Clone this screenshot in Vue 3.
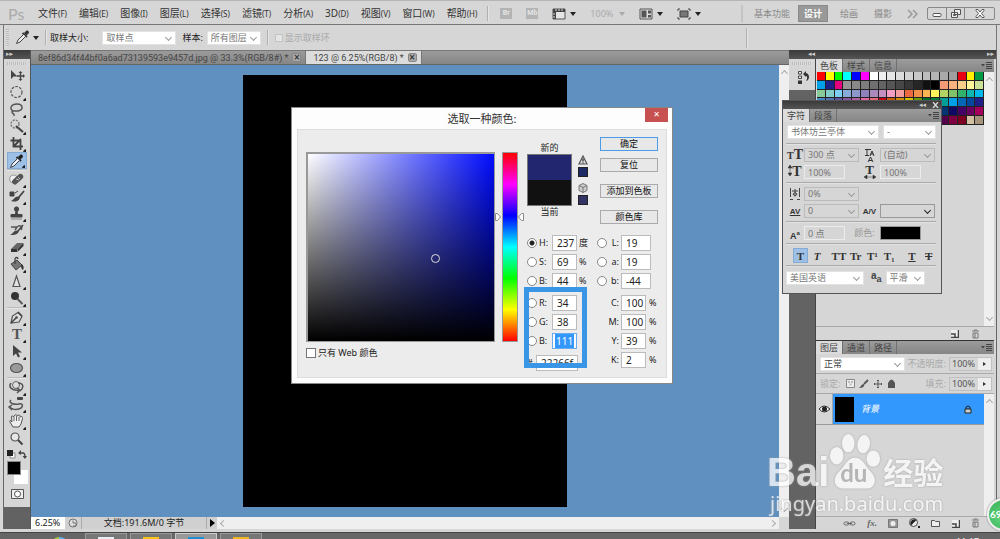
<script setup>
import { ref } from 'vue'

const menus = ['文件(F)', '编辑(E)', '图像(I)', '图层(L)', '选择(S)', '滤镜(T)', '分析(A)', '3D(D)', '视图(V)', '窗口(W)', '帮助(H)'].map(m => m.split('('))
const spaces = ['基本功能', '设计', '绘画', '摄影']

const tools = [
  { n: '移动', s: '<path d="M3 3v9l2.500-2.500h4z" fill="#444"/><path d="M12.500 5.500v7M9 9h7" stroke="#444" stroke-width="1.400" fill="none"/><path d="M12.500 4l2 2h-4zM12.500 14l2-2h-4zM17 9l-2-2v4z" fill="#444"/>' },
  { n: '选框', c: 1, s: '<circle cx="8.500" cy="8" r="5.500" fill="none" stroke="#555" stroke-width="1.200" stroke-dasharray="2.600 1.400"/>' },
  { n: '套索', c: 1, s: '<path d="M5 10C1 8 3 3 9 3s7 6 1 7c-3 .5-6-1-6 1s3 1 2 4" fill="none" stroke="#555" stroke-width="1.500"/>' },
  { n: '魔棒', c: 1, s: '<circle cx="7" cy="6" r="4" fill="none" stroke="#777" stroke-width="1.300" stroke-dasharray="2 1.200"/><path d="M8 8l7 6" stroke="#444" stroke-width="2.200"/>' },
  { n: '裁剪', c: 1, s: '<path d="M5.500 2v9.500H15M2.500 5.500h10V15M6 11l7-7" fill="none" stroke="#444" stroke-width="1.800"/>' },
  { n: '吸管', c: 1, on: 1, s: '<path d="M10 4l2-2c1.500-1.500 4 1 2.500 2.500l-2 2z" fill="#222"/><path d="M8.500 4l4.500 4" stroke="#222" stroke-width="1.800"/><path d="M9.500 5.500L4 11l-1.500 3.500L6 13l5.500-5.500" fill="#e8eef5" stroke="#444"/>' },
  { sep: 1 },
  { n: '修复', c: 1, s: '<circle cx="5.500" cy="8" r="4" fill="#eee" stroke="#999"/><rect x="3" y="5.500" width="13" height="5.500" rx="2.700" fill="#555" transform="rotate(-42 9.500 8)"/><path d="M8 8l3 1M10 6l2 2" stroke="#bbb"/>' },
  { n: '画笔', c: 1, s: '<path d="M2 4h4v4H2zM7 5l3-2" fill="#444" stroke="#444"/><path d="M16 3l-5 6" stroke="#444" stroke-width="1.800"/><path d="M12 9c-1 5-5 5-9 4 3-1 4-6 9-4z" fill="#444"/>' },
  { n: '图章', c: 1, s: '<circle cx="8.500" cy="4" r="2.500" fill="#444"/><path d="M7.500 5h2l.5 4h-3z" fill="#444"/><rect x="2.500" y="9" width="12" height="3.500" rx="1" fill="#444"/><path d="M3 14h11" stroke="#888"/>' },
  { n: '历史', c: 1, s: '<path d="M3 5h6l-2 3M9 5c3-3 6 0 4 3" fill="none" stroke="#555" stroke-width="1.500"/><path d="M15 3l-5 6" stroke="#444" stroke-width="1.500"/><path d="M11 9c-1 4-5 4-9 4 3-1 4-6 9-4z" fill="#444"/>' },
  { n: '橡皮', c: 1, s: '<path d="M3 10l6-6h6.500l-6 6z" fill="#666"/><path d="M3 10v3h6v-3zM9.500 13l6-6V4l-6 6z" fill="#333"/>' },
  { n: '油漆桶', c: 1, s: '<path d="M3 8l6-4 5 5-6 5z" fill="#777" stroke="#444"/><path d="M7 8V3c0-2 3-2 3 0" fill="none" stroke="#444" stroke-width="1.300"/><path d="M13 8c3 1 3 4 2 6-2-1-2-3-2-6z" fill="#333"/>' },
  { n: '锐化', c: 1, s: '<path d="M8.500 3L12 13.500H5z" fill="#e3e3e3" stroke="#555" stroke-width="1.200"/>' },
  { n: '减淡', c: 1, s: '<circle cx="7" cy="6" r="4" fill="#333"/><path d="M9.500 9l5 5" stroke="#555" stroke-width="1.800"/>' },
  { sep: 1 },
  { n: '钢笔', c: 1, s: '<path d="M3 14L4.500 7 10 3.500l4 4L11 13z" fill="#ddd" stroke="#555" stroke-width="1.200"/><path d="M3 14l5-5M10 3l4 4" stroke="#444" stroke-width="1.500"/><circle cx="8.500" cy="8.500" r="1.300" fill="#444"/>' },
  { n: '文字', c: 1, t: 'T' },
  { n: '路径', c: 1, s: '<path d="M5 2v11l3-2.500 2 4 2-1-2-4h4z" fill="#444"/>' },
  { n: '椭圆', c: 1, s: '<ellipse cx="8.500" cy="8" rx="6" ry="4.500" fill="#999" stroke="#555" stroke-width="1.200"/>' },
  { sep: 1 },
  { n: '3D旋转', c: 1, s: '<circle cx="8" cy="6" r="3.500" fill="#ddd" stroke="#666"/><path d="M3 4c-3 4 1 8 8 7M10 4c6 0 6 5 2 8M9 9l3 2-3 3" fill="none" stroke="#555" stroke-width="1.500"/>' },
  { n: '3D环绕', c: 1, s: '<path d="M3 4c-3 3 3 5 8 4 5-1 4 4 0 5-4 1-8 0-9-2M4 9l-3 2 3 3" fill="none" stroke="#555" stroke-width="1.500"/><rect x="9" y="1" width="6" height="3" rx="1" fill="#444"/>' },
  { n: '抓手', c: 1, s: '<path d="M5 14L2 9c-1-2 1-2 2 0L3.500 4c0-1.500 1.500-1.500 2 0L7 2c1-1 2 0 2 1l2-1c1 0 1 1 1 2l1.500-.5c1 0 1 1 1 2L13 11l-2 3z" fill="#eee" stroke="#555"/><path d="M6 8V4M8.500 8V3M11 8V4" stroke="#666"/>' },
  { n: '缩放', s: '<circle cx="7" cy="7" r="4" fill="#e6e6e6" stroke="#555" stroke-width="1.200"/><path d="M10 10l4.500 4.500" stroke="#444" stroke-width="1.900"/>' }
]

const swatches = [
  '#f00 #ff0 #0f0 #0ff #00f #f0f #fff #f0f0f0 #e6e6e6 #dcdcdc #d2d2d2 #c8c8c8 #bebebe #b4b4b4 #aaa #a0a0a0 #e60012 #fff100 #009944',
  '#00a0e9 #1d2088 #e4007f #959595 #898989 #7d7d7d #707070 #636363 #555 #464646 #363636 #262626 #111 #000 #f29b76 #f6b37f #facd89 #fff799 #cce198',
  '#89c997 #84ccc9 #7ecef4 #88abda #8c97cb #8f82bc #aa89bd #c490bf #f19ec2 #f29c9f #eb6841 #f19149 #f8b551 #fff45c #b3d465 #80c269 #32b16c #13b5b1 #00b7ee',
  '#448aca #556fb5 #5f52a0 #8957a1 #ae5da1 #ea68a2 #eb6877 #c40014 #c85a00 #d28c00 #cfc000 #639b00 #006e2b #007d3c #009e96 #00a0e9 #0068b7 #00479d #1d2088',
  '#601986 #920783 #be0081 #c7005c #c5003d #a40000 #a84200 #ac6a00 #b7aa00 #638c0b #097c25 #007130 #00736d #0075a9 #003473 #100964 #440062 #6a005f #a4005b',
  '#7d0022 #7d0000 #7f2d00 #834e00 #8a8000 #486a00 #005e15 #005621 #005752 #005982 #002c58 #07004b #32004b #51004a #52004a #7e0043 #7d0022 #d3bfa2 #a6937c'
].join(' ').split(' ')

const mode = ref('H')
const hue = ref(237)
const left = [
  { k: 'H', v: '237', u: '度' }, { k: 'S', v: '69', u: '%' }, { k: 'B', v: '44', u: '%' },
  { k: 'R', v: '34', gap: 1 }, { k: 'G', v: '38' }, { k: 'B', id: 'Blue', v: '111', sel: 1 }
]
const right = [
  { k: 'L', v: '19' }, { k: 'a', v: '19' }, { k: 'b', id: 'lab-b', v: '-44' },
  { k: 'C', v: '100', u: '%', gap: 1 }, { k: 'M', v: '100', u: '%' }, { k: 'Y', v: '39', u: '%' }, { k: 'K', v: '2', u: '%' }
]
const typeStyles = ['T', 'T', 'TT', 'Tr', 'T¹', 'T₁', 'T', 'T']
const tasks = ['#e8eef4', '#f5c518', '#1f8fd0', '#e8b923']
</script>

<template>
  <div class="app">
    <header class="menubar">
      <span class="ps">Ps</span>
      <nav><button v-for="m in menus" :key="m[1]">{{ m[0] }}<small>({{ m[1] }}</small></button></nav>
      <i class="vr"></i>
      <div class="appicons">
        <span class="chip">Br</span><span class="chip">Mb</span>
        <button class="ico" aria-label="查看额外内容"><svg width="14" height="12" viewBox="0 0 14 12"><path d="M1 1h12v10H1z" fill="#e5e5e5" stroke="#555" /><path d="M1 1h12v3H4v7H1z" fill="#444" /><path d="M4 1v2M7 1v2M10 1v2M1 6h2M1 9h2" stroke="#ddd" /></svg><b class="tri"></b></button>
        <button class="ico pct">100%<b class="tri"></b></button>
        <button class="ico" aria-label="排列文档"><svg width="14" height="12" viewBox="0 0 14 12"><path d="M1 1h12v10H1z" fill="#ddd" stroke="#555" /><path d="M2.500 2.500h5v7h-5zM9 2.500h3v3H9zM9 7h3v2.500H9z" fill="#555" /></svg><b class="tri"></b></button>
        <button class="ico" aria-label="屏幕模式"><svg width="14" height="12" viewBox="0 0 14 12"><path d="M1 3V1h2M11 1h2v2M13 9v2h-2M3 11H1V9" fill="none" stroke="#444" /><path d="M3 3h8v6H3z" fill="#777" stroke="#444" /></svg><b class="tri"></b></button>
      </div>
      <div class="spaces">
        <button v-for="(s, i) in spaces" :key="s" :class="{ on: i === 1 }">{{ s }}</button>
        <button class="more" aria-label="更多"><svg width="11" height="10" viewBox="0 0 11 10"><path d="M1 1l4 4-4 4M6 1l4 4-4 4" fill="none" stroke="#999" stroke-width="1.500" /></svg></button>
      </div>
      <div class="winbtns">
        <button aria-label="最小化"><svg width="10" height="8"><rect x="1" y="3.500" width="8" height="3" rx="1" fill="#fff" stroke="#555" /></svg></button>
        <button aria-label="还原"><svg width="10" height="9"><path d="M3.500.500h6v5h-6zM.500 3.500h6v5h-6z" fill="#eee" stroke="#555" /><path d="M2.500 5.500h2v1h-2z" stroke="#555" fill="none" /></svg></button>
        <button class="wide" aria-label="关闭"><svg width="10" height="9"><path d="M1 .500h2l2 2.500 2-2.500h2v1L6.500 4.500 9 7.500v1H7L5 6 3 8.500H1v-1l2.500-3L1 1.500z" fill="#fff" stroke="#555" /></svg></button>
      </div>
    </header>

    <section class="options">
      <i class="grip-v"></i>
      <svg class="drop" width="18" height="17" viewBox="0 0 18 17"><path d="M10 4l2-2c1.500-1.500 4 1 2.500 2.500l-2 2z" fill="#333" /><path d="M8.500 4l4.500 4" stroke="#333" stroke-width="1.800" /><path d="M9.500 5.500L4 11l-1.500 3.500L6 13l5.500-5.500" fill="#eee" stroke="#444" /></svg>
      <b class="tri"></b>
      <i class="vr"></i>
      <label for="size">取样大小:</label>
      <span class="sel w73"><select id="size"><option>取样点</option></select></span>
      <label for="sample">样本:</label>
      <span class="sel w53"><select id="sample"><option>所有图层</option></select></span>
      <i class="vr thin"></i>
      <label class="dim"><input type="checkbox" disabled />显示取样环</label>
      <i class="vr end"></i>
    </section>

    <main class="work">
      <aside class="toolbar">
        <div class="dark"><span>▸▸</span></div>
        <div class="tools">
          <i class="grip"></i>
          <template v-for="(t, i) in tools" :key="i">
            <hr v-if="t.sep" />
            <button v-else :class="{ on: t.on }" :aria-label="t.n">
              <span v-if="t.t" class="glyph">{{ t.t }}</span>
              <svg v-else width="18" height="17" viewBox="0 0 18 17" v-html="t.s"></svg>
              <i v-if="t.c" class="corner"></i>
            </button>
          </template>
          <div class="mini">
            <svg width="9" height="9"><path d="M3 3h5v5H3z" fill="#fff" stroke="#888" /><path d="M0 0h6v6H0z" fill="#222" /></svg>
            <svg width="9" height="9"><path d="M1 3h4q2 0 2 4" fill="none" stroke="#444" stroke-width="1.300" /><path d="M0 3l3-3v5zM7 9L4.500 6h4.500z" fill="#444" /></svg>
          </div>
          <div class="fgbg"><i class="bg"></i><i class="fg"></i></div>
          <button class="mask" aria-label="快速蒙版"><svg width="13" height="10"><path d="M.500.500h12v9H.500z" fill="#eee" stroke="#555" /><circle cx="6.500" cy="5" r="3" fill="#fff" stroke="#555" /></svg></button>
        </div>
      </aside>

      <section class="doc">
        <div class="tabs">
          <div class="tab">8ef86d34f44bf0a6ad73139593e9457d.jpg @ 33.3%(RGB/8#) * <button aria-label="关闭">×</button></div>
          <div class="tab on">123 @ 6.25%(RGB/8) * <button aria-label="关闭">×</button></div>
        </div>
        <div class="view">
          <div class="stage"><div class="paper"></div></div>
          <div class="scroll"><i class="chev up"></i><i class="chev"></i></div>
        </div>
        <footer class="status">
          <input class="zoom" aria-label="缩放" value="6.25%" />
          <span class="clock"><svg width="10" height="10"><circle cx="5" cy="5" r="4" fill="#ddd" stroke="#777" /><path d="M5 2.500V5h3v3H5" fill="none" stroke="#777" /></svg></span>
          <span class="info">文档:191.6M/0 字节</span>
          <button class="play" aria-label="选项"></button>
          <div class="hscroll"><i class="chev lt"></i><i class="chev rt"></i></div>
          <i class="cornerbox"></i>
        </footer>
      </section>

      <section class="dock">
        <div class="dark"><span class="a">◂◂</span><span>▸▸</span></div>
        <div class="cols">
          <div class="iconcol"><div class="iconbox"><i class="grip"></i>
            <svg width="13" height="15" viewBox="0 0 13 15"><path d="M1.500 1.500h3v2.500h-3zM1.500 6h3v2.500h-3z" fill="#eee" stroke="#444" /><path d="M1 10.500h4V14H1z" fill="#333" /><path d="M6 4l3-3v2c4 1 4 7 0 8 2-3 1-5 0-5v1z" fill="#333" /></svg></div></div>
          <div class="panels">
            <div class="ptabs"><button class="on">色板</button><button>样式</button><button>信息</button><svg class="pm" width="11" height="7"><path d="M0 2h4L2 4.500zM5 0h6v1H5zM5 2h6v1H5zM5 4h6v1H5zM5 6h6v1H5z" fill="#444" /></svg></div>
            <div class="swpanel">
              <div class="swgrid"><i v-for="(c, i) in swatches" :key="i" :style="{ background: c }"></i></div>
              <div class="scroll"><i class="chev up"></i><i class="chev"></i></div>
            </div>
            <div class="pfoot sw">
              <svg width="9" height="9"><path d="M1 1h7v7H1z" fill="#eee" /><path d="M8.500 1v7.500H1M1 5h4v3" fill="none" stroke="#444" stroke-width="1.500" /></svg>
              <svg width="9" height="10"><path d="M1 2h7M3 1h3M2 4h5v5H2zM4 4v5" fill="none" stroke="#777" /></svg>
            </div>
            <div class="ptabs layer-tabs"><button class="on">图层</button><button>通道</button><button>路径</button><svg class="pm" width="11" height="7"><path d="M0 2h4L2 4.500zM5 0h6v1H5zM5 2h6v1H5zM5 4h6v1H5zM5 6h6v1H5z" fill="#444" /></svg></div>
            <div class="lrow">
              <span class="sel grow"><select aria-label="混合模式"><option>正常</option></select></span>
              <label for="op">不透明度:</label><span class="num"><input id="op" value="100%" /><b></b></span>
            </div>
            <div class="lrow">
              <span class="lk">锁定:</span>
              <span class="locks">
                <svg width="9" height="9"><path d="M.500.500h8v8h-8z" fill="#eee" stroke="#888" /><path d="M2 2h2v2H2zM5 2h2v2H5zM3.500 4.500h2v2h-2z" fill="#bbb" /></svg>
                <svg width="10" height="10"><path d="M9 1L5 5" stroke="#555" stroke-width="1.800" /><path d="M5 5c1 3-2 4-5 4 2-1 2-4 5-4z" fill="#555" /></svg>
                <svg width="10" height="10"><path d="M5 1v8M1 5h8M4 2l1-1 1 1M4 8l1 1 1-1M2 4L1 5l1 1M8 4l1 1-1 1" fill="none" stroke="#555" /></svg>
                <svg width="9" height="10"><path d="M1 4q3.500-7 7 0v5H1z" fill="#555" /></svg>
              </span>
              <label for="fill">填充:</label><span class="num"><input id="fill" value="100%" /><b></b></span>
            </div>
            <div class="layers">
              <div class="list">
                <div class="item">
                  <span class="eye"><svg width="11" height="8"><path d="M0 4q5-6 11 0-6 6-11 0z" fill="#eee" stroke="#333" /><circle cx="5.500" cy="4" r="2.500" fill="#222" /></svg></span>
                  <i class="thumb"></i><em>背景</em>
                  <svg width="8" height="9"><path d="M1 4h6v4H1z" fill="#ccc" stroke="#222" /><path d="M2 4V2q2-2 4 0v2" fill="none" stroke="#222" /></svg>
                </div>
              </div>
              <div class="scroll"><i class="chev up"></i></div>
            </div>
            <div class="pfoot">
              <svg width="13" height="9"><rect x="1" y="3" width="5" height="3" rx="1.500" fill="none" stroke="#666" /><rect x="7" y="3" width="5" height="3" rx="1.500" fill="none" stroke="#666" /><path d="M4 4.500h5" stroke="#666" /></svg>
              <i class="fx">fx.</i>
              <svg width="10" height="9"><path d="M.500.500h9v8h-9z" fill="#999" stroke="#777" /><circle cx="5" cy="4.500" r="2.500" fill="#eee" /></svg>
              <svg width="11" height="10"><circle cx="4.500" cy="4.500" r="4" fill="#eee" stroke="#444" /><path d="M2 7.500A4 4 0 0 1 7.500 2z" fill="#222" /><path d="M9 8h2v2H9z" fill="#222" /></svg>
              <svg width="9" height="8"><path d="M.500 1.500h3l1 1h4v5h-8z" fill="#eee" stroke="#555" /></svg>
              <svg width="9" height="9"><path d="M1 1h7v7H1z" fill="#eee" /><path d="M8.500 1v7.500H1M1 5h4v3" fill="none" stroke="#444" stroke-width="1.500" /></svg>
              <svg width="9" height="10"><path d="M1 2h7M3 1h3M2 4h5v5H2zM4 4v5" fill="none" stroke="#777" /></svg>
            </div>
          </div>
        </div>
      </section>
    </main>

    <footer class="taskbar">
      <i class="orb"></i>
      <span v-for="(c, i) in tasks" :key="c" class="task" :class="{ on: i === 2 }"><i :style="{ background: c }"></i></span>
      <time>11:17</time>
    </footer>

    <section class="char" aria-label="字符面板">
      <div class="dark"><span>◂◂</span><svg width="7" height="6"><path d="M1 0l5 6M6 0L1 6" stroke="#ddd" stroke-width="1.300" /></svg></div>
      <div class="ptabs"><button class="on">字符</button><button>段落</button><svg class="pm" width="11" height="7"><path d="M0 2h4L2 4.500zM5 0h6v1H5zM5 2h6v1H5zM5 4h6v1H5zM5 6h6v1H5z" fill="#444" /></svg></div>
      <div class="cbody">
        <div class="crow first"><span class="sel font"><select aria-label="字体"><option>书体坊兰亭体</option></select></span><span class="sel dash"><select aria-label="样式"><option>-</option></select></span></div>
        <hr />
        <div class="cgrid">
          <label for="c1" class="ti"><small>T</small>T</label><span class="sel flat"><select id="c1"><option>300 点</option></select></span>
          <label for="c2"><svg width="10" height="13"><path d="M0 .500h6M0 6.500h4M2 1v5M5 7l2-5 2 5M5.500 5h3M3 13l2.500-5L8 13M4 11.500h3" fill="none" stroke="#333" /></svg></label><span class="sel flat"><select id="c2"><option>(自动)</option></select></span>
          <label for="c3" class="ti"><svg width="4" height="11"><path d="M2 2v7M0 3l2-3 2 3zM0 8l2 3 2-3z" fill="#333" stroke="#333" stroke-width=".5" /></svg>T</label><input id="c3" value="100%" />
          <label for="c4" class="tw">T<svg width="12" height="4"><path d="M2 2h8M0 2l3-2v4zM12 2L9 0v4z" fill="#333" stroke="#333" stroke-width=".5" /></svg></label><input id="c4" value="100%" />
        </div>
        <hr />
        <div class="cgrid">
          <label for="c5"><svg width="12" height="13"><path d="M1.500 0v9M10.500 0v9M3 3h6M6 1v7M4 6q2-3 4 0-2 4-4 0M1 11.500h3M8 11.500h3" fill="none" stroke="#444" /></svg></label><span class="sel flat"><select id="c5"><option>0%</option></select></span><i></i><i></i>
          <label for="c6" class="av">AV</label><span class="sel flat"><select id="c6"><option>0</option></select></span>
          <label for="c7" class="av k">A/V</label><span class="sel flat act"><select id="c7"><option></option></select></span>
        </div>
        <hr />
        <div class="cgrid">
          <label for="c8" class="aa">A<sup>a</sup></label><input id="c8" value="0 点" />
          <label class="clr" for="c9">颜色:</label><button id="c9" class="black" aria-label="颜色"></button>
        </div>
        <hr />
        <div class="tstyles"><button v-for="(t, i) in typeStyles" :key="i" :class="'t' + i">{{ t }}</button></div>
        <hr />
        <div class="crow last"><span class="sel lang"><select aria-label="语言"><option>美国英语</option></select></span><label for="c10">a<sub>a</sub></label><span class="sel aas"><select id="c10"><option>平滑</option></select></span></div>
      </div>
    </section>

    <div class="watermark">
      <div class="wl"><span>Bai</span>
        <span class="paw"><svg width="52" height="57" viewBox="0 0 54 58"><g fill="#fff"><ellipse cx="8" cy="23" rx="7" ry="9" /><ellipse cx="20" cy="10" rx="6.500" ry="9.500" /><ellipse cx="36" cy="11" rx="6.500" ry="9.500" transform="rotate(8 36 11)" /><ellipse cx="46" cy="26" rx="7" ry="8.500" /><path d="M27 25c8 0 10 8 16 14 8 8 5 18-4 18-6 0-18 0-24 0-10 0-12-11-4-18 6-6 8-14 16-14z" /></g></svg><b>du</b></span>
        <span class="jy">经验</span></div>
      <div class="url">jingyan.baidu.com</div>
    </div>
    <div class="badge">69</div>

    <section class="dialog" role="dialog" aria-label="选取一种颜色">
      <header><h1>选取一种颜色:</h1><button class="close" aria-label="关闭">✕</button></header>
      <div class="dbody">
        <div class="pick">
          <div class="sv"><i class="ring"></i></div>
          <label class="web"><input type="checkbox" />只有 Web 颜色</label>
        </div>
        <div class="hue">
          <input v-model="hue" type="range" min="0" max="360" aria-label="色相" />
          <svg class="al" width="6" height="8"><path d="M.500.500h2l3 3.500-3 3.500h-2z" fill="#fff" stroke="#888" /></svg>
          <svg class="ar" width="6" height="8"><path d="M5.500.500h-2L.500 4l3 3.500h2z" fill="#fff" stroke="#888" /></svg>
        </div>
        <div class="side">
          <div class="top">
            <div class="cmp"><span>新的</span><div class="pair"><i></i><i></i></div><span>当前</span></div>
            <div class="warn">
              <svg width="10" height="10"><path d="M5 1l4 8H1z" fill="#ddd" stroke="#555" stroke-width="1.200" /><path d="M5 3.500v3M5 7.500v1" stroke="#333" stroke-width="1.300" /></svg><i></i>
              <svg width="10" height="10"><path d="M5 .500l4 2v5l-4 2-4-2v-5z" fill="#ccc" stroke="#777" /><path d="M1 2.500l4 2 4-2M5 4.500v5" fill="none" stroke="#777" /></svg><i class="v"></i>
            </div>
            <div class="btns"><button class="ok">确定</button><button>复位</button><button class="far">添加到色板</button><button class="far">颜色库</button></div>
          </div>
          <div class="fields">
            <div class="fcol">
              <div v-for="f in left" :key="f.id || f.k" class="f" :class="{ gap: f.gap }">
                <input :id="'r' + (f.id || f.k)" v-model="mode" type="radio" name="m" :value="f.id || f.k" />
                <label :for="'r' + (f.id || f.k)">{{ f.k }}:</label>
                <span v-if="f.sel" class="box focus"><mark>{{ f.v }}</mark></span>
                <input v-else class="box" :aria-label="f.k" :value="f.v" />
                <span class="u">{{ f.u }}</span>
              </div>
              <div class="f hex gap"><label for="hex">#</label><input id="hex" class="box" value="22266f" /></div>
            </div>
            <div class="fcol rt">
              <div v-for="(f, i) in right" :key="f.k" class="f" :class="{ gap: f.gap, wide: i < 3 }">
                <input v-if="i < 3" :id="'q' + f.k" v-model="mode" type="radio" name="m" :value="f.id || 'lab' + f.k" />
                <label :for="'v' + f.k">{{ f.k }}:</label>
                <input :id="'v' + f.k" class="box" :value="f.v" />
                <span class="u">{{ f.u }}</span>
              </div>
            </div>
            <i class="frame"></i>
          </div>
        </div>
      </div>
    </section>
  </div>
</template>

<style>
body { margin: 0; }
</style>

<style scoped>
* { box-sizing: border-box; }
.app { position: relative; display: flex; flex-direction: column; min-height: 100vh; overflow: hidden; background: #d6d6d6; color: #333; font: 9px/12px "Noto Sans", "Noto Sans CJK SC", sans-serif; white-space: nowrap; }
button, input, select { font: inherit; color: inherit; margin: 0; padding: 0; border: 0; background: none; border-radius: 0; min-width: 0; }
i, em { font-style: normal; }
svg { display: block; flex: none; }
hr { border: 0; margin: 0; }
.tri { display: inline-block; border: 3px solid transparent; border-top: 4px solid #222; border-bottom: 0; }
.chev { width: 5px; height: 5px; border: solid #aaa; border-width: 0 1px 1px 0; transform: rotate(45deg); }
.chev.up { transform: rotate(225deg); }
.chev.lt { transform: rotate(135deg); }
.chev.rt { transform: rotate(-45deg); }
.scroll { width: 10px; flex: none; background: #efefef; display: flex; flex-direction: column; align-items: center; justify-content: space-between; padding: 6px 0; }
.grip { display: block; height: 3px; margin: 2px 3px; background: repeating-linear-gradient(90deg, #bbb 0 1px, #ddd 1px 2px); }

.menubar { display: flex; align-items: center; height: 25px; padding: 2px 5px 0 8px; border-top: 1px solid #b5b5b5; border-bottom: 1px solid #777; }
.ps { width: 30px; color: #aaa; font: 16px/18px Lato, sans-serif; }
nav { display: flex; gap: 12px; font-size: 10px; }
nav small { font-size: 8px; }
.vr { width: 2px; height: 15px; background: #b0b0b0; border-right: 1px solid #e5e5e5; }
.menubar .vr { margin-left: 10px; }
.appicons { display: flex; align-items: center; gap: 14px; margin-left: 11px; }
.chip { width: 12px; height: 11px; background: #b4b4b4; color: #e5e5e5; font: bold 7px/11px Roboto, sans-serif; text-align: center; }
.ico { display: flex; align-items: center; gap: 4px; }
.pct { color: #aaa; gap: 6px; }
.pct .tri { border-top-color: #aaa; }
.spaces { display: flex; align-items: center; margin-left: auto; padding-left: 4px; border-left: 2px solid #c3c3c3; color: #888; }
.spaces button { padding: 0 7px; height: 17px; }
.spaces button:first-child { padding-right: 4px; }
.spaces button:nth-child(n+3) { padding: 0 8px; }
.spaces .on { margin: 0 4px; background: #999; border: 1px solid #8a8a8a; color: #fff; font-weight: bold; padding: 0 5px; }
.spaces .more:last-child { padding: 0 6px 0 7px; }
.winbtns { display: flex; margin-left: 3px; border: 1px solid #888; border-radius: 2px; height: 13px; }
.winbtns button { display: grid; place-items: center; width: 18px; }
.winbtns button + button { border-left: 1px solid #888; }
.winbtns .wide { width: 30px; }

.options { display: flex; align-items: center; height: 25px; margin: 0 3px; border-left: 1px solid #777; border-right: 1px solid #777; color: #222; }
.grip-v { width: 3px; height: 18px; margin: 0 5px 0 2px; background: repeating-linear-gradient(#bbb 0 1px, #ddd 1px 2px); }
.options .tri { margin: 0 6px 0 1px; }
.options > label:not(.dim) { margin-left: 3px; }
.options .sel { margin: 0 3px 0 14px; }
.options .w53 { margin: 0 6px 0 4px; }
.sel { position: relative; display: inline-flex; height: 14px; background: #fff; border: 1px solid #e2e2e2; color: #777; }
.sel select { appearance: none; width: 100%; padding: 0 12px 0 3px; line-height: 12px; }
.sel::after { content: ""; position: absolute; right: 4px; top: 3px; width: 4px; height: 4px; border: solid #999; border-width: 0 1px 1px 0; transform: rotate(45deg); pointer-events: none; }
.w73 { width: 74px; }
.w53 { width: 54px; }
.dim { display: flex; align-items: center; gap: 2px; color: #aaa; margin-left: 6px; }
.dim input { appearance: none; width: 8px; height: 8px; border: 1px solid #c3c3c3; background: #e5e5e5; }
.end { margin: 0 248px 0 auto; height: 20px; }

.work { display: flex; flex: 1; margin: 0 3px; border: solid #666; border-width: 0 1px; }
.dark { display: flex; justify-content: space-between; align-items: center; height: 9px; padding: 0 2px; background: linear-gradient(#3a3a3a, #555); color: #ccc; font: 7px/9px "DejaVu Sans", sans-serif; }
.toolbar { width: 27px; flex: none; background: #626262; border-right: 1px solid #555; }
.tools { display: flex; flex-direction: column; align-items: center; background: #d6d6d6; padding: 1px 0 5px; }
.tools .grip { align-self: stretch; }
.tools button { position: relative; display: grid; place-items: center; width: 20px; height: 17px; }
.tools .on { background: #9dc0e6; border: 1px solid #86acd5; }
.tools hr { width: 20px; height: 2px; background: #bbb; border-bottom: 1px solid #e5e5e5; }
.corner { position: absolute; right: 1px; bottom: 0; border: 2px solid transparent; border-right-color: #222; border-bottom-color: #222; border-top-width: 1px; border-left-width: 1px; }
.glyph { font: bold 15px/17px "Liberation Serif", serif; color: #555; }
.mini { display: flex; justify-content: space-between; width: 20px; margin-top: 3px; }
.fgbg { position: relative; width: 21px; height: 23px; margin-top: 2px; }
.fg, .bg { position: absolute; width: 14px; height: 14px; }
.fg { left: 0; top: 0; background: #000; border: 1px solid #888; }
.bg { right: 0; bottom: 0; background: #fff; }
.tools .mask { margin-top: 1px; }

.doc { display: flex; flex-direction: column; flex: 1; min-width: 0; }
.tabs { display: flex; height: 15px; background: linear-gradient(#9b9b9b, #868686); border-top: 1px solid #777; border-bottom: 1px solid #666; }
.tab { display: flex; align-items: center; gap: 4px; padding: 0 4px 0 7px; font-family: Roboto, sans-serif; border-right: 1px solid #777; color: #444; }
.tab.on { background: #dcdcdc; }
.tab button { width: 9px; height: 9px; background: #aaa; border: 1px solid #888; border-radius: 2px; font: bold 8px/7px "DejaVu Sans", sans-serif; color: #333; }
.view { display: flex; flex: 1; background: #6090c0; }
.stage { flex: 1; display: flex; justify-content: center; padding: 10px 0; }
.paper { aspect-ratio: 3 / 4; background: #000; }
.status { display: flex; height: 12px; background: #d0d0d0; color: #222; }
.zoom { width: 34px; padding: 0 4px; background: #fff; }
.clock { width: 17px; padding: 1px 3px; border-right: 1px solid #aaa; }
.info { width: 125px; text-align: center; border-right: 1px solid #aaa; }
.play { width: 10px; display: grid; place-items: center; }
.play::after { content: ""; border: 4px solid transparent; border-left: 5px solid #000; border-right: 0; }
.hscroll { flex: 1; display: flex; align-items: center; justify-content: space-between; padding: 0 4px; background: #efefef; }
.cornerbox { width: 10px; background: #d6d6d6; }

.dock { display: flex; flex-direction: column; width: 207px; flex: none; }
.dock .dark .a { margin-left: 17px; }
.cols { display: flex; flex: 1; }
.iconcol { width: 27px; background: #636363; border-right: 1px solid #444; }
.iconbox { height: 31px; background: #d6d6d6; padding: 1px 0; }
.iconbox svg { margin: 5px 0 0 8px; }
.panels { display: flex; flex-direction: column; flex: 1; min-width: 0; padding-right: 2px; }
.ptabs { display: flex; height: 13px; background: linear-gradient(#9c9c9c, #868686); }
.ptabs button { padding: 0 4px; border-right: 1px solid #707070; color: #444; }
.ptabs .on { background: #dcdcdc; }
.pm { margin: 3px 2px 0 auto; }
.swpanel { display: flex; height: 255px; border-bottom: 1px solid #aaa; }
.swgrid { flex: 1; display: grid; grid-template-columns: repeat(19, 1fr); align-content: start; padding-left: 1px; }
.swgrid i { aspect-ratio: 1; border: solid #222; border-width: 0 1px 1px 0; }
.pfoot { display: flex; align-items: center; justify-content: flex-end; gap: 11px; height: 13px; padding-right: 14px; border-top: 1px solid #aaa; }
.pfoot.sw { gap: 12px; border: 0; }
.fx { font: italic bold 9px/9px "Liberation Serif", serif; color: #666; }
.layer-tabs { border-top: 1px solid #333; height: 14px; }
.lrow { display: flex; align-items: center; height: 20px; padding: 0 2px 0 4px; color: #aaa; border-bottom: 1px solid #aaa; }
.grow { flex: 1; margin-right: 3px; color: #444; }
.lk { margin-right: 6px; }
.locks { display: flex; gap: 4px; margin-right: auto; }
.num { display: flex; align-items: center; width: 43px; height: 14px; margin-left: 3px; border: 1px solid #c0c0c0; color: #555; }
.num input { flex: 1; width: 20px; padding-left: 2px; }
.num b { width: 13px; height: 12px; background: #eee; display: grid; place-items: center; }
.num b::after { content: ""; border: 2px solid transparent; border-left: 3px solid #333; border-right: 0; }
.layers { display: flex; flex: 1; }
.list { flex: 1; }
.item { display: flex; align-items: center; height: 31px; padding-right: 12px; background: #3398fe; border-bottom: 1px solid #999; color: #fff; }
.eye { display: grid; place-items: center; width: 17px; height: 30px; background: #d6d6d6; border-right: 1px solid #aaa; }
.thumb { width: 19px; height: 25px; margin: 0 7px 0 2px; background: #000; }
.item em { flex: 1; font-style: italic; }

.taskbar { position: relative; display: flex; gap: 3px; height: 10px; padding-left: 50px; overflow: hidden; background: #666; border-top: 3px solid #d6d6d6; box-shadow: inset 0 1px #444; }
.orb { width: 19px; height: 19px; margin: 5px 13px 0 0; border-radius: 50%; background: linear-gradient(90deg, #a6ce39 50%, #59b4e8 50%); }
.task { width: 42px; height: 9px; margin-top: 1px; padding: 3px 12px; background: #777; border: 1px solid #999; }
.task.on { background: #999; border-color: #ccc; }
.task i { display: block; height: 10px; }
.taskbar time { margin: 4px 21px 0 auto; color: #eee; }

.char { position: absolute; left: 782px; top: 100px; width: 160px; background: #d6d6d6; border: 1px solid #555; }
.char .dark { justify-content: flex-end; gap: 6px; height: 8px; }
.cbody { padding: 3px 5px 8px 3px; color: #777; }
.crow { display: flex; gap: 4px; }
.crow.first { height: 18px; padding-left: 1px; }
.font { width: 92px; }
.dash { flex: 1; }
.cbody hr { height: 2px; background: #aaa; border-bottom: 1px solid #e2e2e2; margin-bottom: 3px; }
.cgrid { display: grid; grid-template-columns: 18px 55px 21px 55px; row-gap: 3px; padding: 0 0 3px; align-items: center; }
.cgrid label { display: grid; place-items: center; height: 14px; color: #333; }
.cgrid .ti { display: flex; justify-content: center; align-items: baseline; font: bold 14px/14px "Liberation Serif", serif; }
.cgrid .ti small { font-size: 10px; }
.cgrid .tw { align-content: center; font: bold 13px/10px "Liberation Serif", serif; }
.cgrid input { width: 41px; height: 14px; padding-left: 3px; border: 1px solid #ececec; }
.flat { background: #d6d6d6; border-color: #bbb; }
.act { border-color: #999; }
.act::after { border-color: #222; }
.cgrid .av { font: bold 8px/9px "Liberation Sans", sans-serif; text-decoration: underline; }
.cgrid .k { text-decoration: none; }
.cgrid .aa { display: block; text-align: center; font: bold 9px/14px "Liberation Sans", sans-serif; }
.cgrid .aa sup { font-size: 6px; }
.cgrid .clr { color: #999; margin-left: -10px; }
.cgrid .black { width: 41px; height: 14px; background: #000; border: 1px solid #999; }
.tstyles { display: flex; gap: 2px; padding: 0 0 2px 7px; font: bold 11px/14px "Liberation Serif", serif; color: #333; }
.tstyles button { width: 15px; height: 15px; }
.tstyles .t0 { background: #9dc0e6; border: 1px solid #86acd5; }
.tstyles .t1 { font-style: italic; margin-right: 5px; }
.tstyles .t6 { text-decoration: underline; margin-left: 6px; }
.tstyles .t7 { text-decoration: line-through; }
.crow.last { padding-top: 1px; }
.lang { width: 78px; }
.crow label { margin-left: 3px; font: bold 10px/10px "Liberation Sans", sans-serif; color: #444; }
.crow sub { font-size: 9px; }
.aas { width: 39px; }

.watermark { position: absolute; left: 767px; top: 432px; color: #fff; opacity: .75; filter: drop-shadow(0 0 1px #999); font-family: "Liberation Sans", "Noto Sans CJK SC", sans-serif; }
.wl { display: flex; align-items: flex-end; height: 58px; font-weight: bold; font-size: 40px; line-height: 36px; }
.paw { position: relative; }
.paw b { position: absolute; left: 11px; bottom: 5px; color: #aaa; font: bold 24px/24px Lato, sans-serif; }
.jy { margin-left: 2px; font-size: 30px; line-height: 32px; }
.url { padding: 2px 0 0 3px; font: 20px/24px "Noto Sans", sans-serif; }
.badge { position: absolute; right: -20px; top: 498px; width: 33px; height: 33px; padding-left: 1px; border-radius: 50%; border: 2px solid #eee; background: radial-gradient(circle at 40% 60%, #5fd37b, #32a852); color: #fff; font: bold 10px/29px Lato, sans-serif; box-shadow: 0 0 2px #666; }

.dialog { position: absolute; left: 291px; top: 107px; width: 382px; padding: 0 5px 5px; background: #fdfdfd; border: 1px solid #888; font-size: 10px; }
.dialog header { position: relative; height: 21px; }
h1 { margin: 0; font-size: 11px; line-height: 21px; font-weight: normal; text-align: center; color: #333; }
.close { position: absolute; right: -1px; top: 0; width: 23px; height: 14px; background: #c75050; color: #fff; font: 8px/14px "DejaVu Sans", sans-serif; }
.dbody { display: flex; height: 249px; padding: 7px 8px 0; background: #ececec; border: 1px solid #ddd; }
.pick { flex: none; width: 189px; margin-top: 15px; }
.sv { position: relative; height: 190px; border: 1px solid #999; border-width: 2px 1px 1px 2px; background: linear-gradient(to top, #000, transparent), linear-gradient(to right, #fff, #000cff); }
.ring { position: absolute; left: 69%; top: 56%; width: 9px; height: 9px; margin: -5px; border: 1px solid #ddd; border-radius: 50%; }
.web { display: flex; align-items: center; gap: 2px; margin-top: 5px; color: #222; font-size: 9px; }
.web input { appearance: none; width: 10px; height: 10px; border: 1px solid #777; background: #fff; }
.hue { position: relative; flex: none; width: 16px; height: 190px; margin: 15px 9px 0 7px; }
.hue input { appearance: none; writing-mode: vertical-lr; width: 16px; height: 190px; border: 1px solid #999; background: linear-gradient(red, #f0f, blue, #0ff, #0f0, #ff0, red); }
.hue input::-webkit-slider-thumb { appearance: none; width: 0; height: 0; }
.hue svg { position: absolute; top: 61px; }
.al { left: -7px; }
.ar { right: -6px; }
.side { flex: 1; min-width: 0; }
.top { display: flex; height: 96px; }
.cmp { display: flex; flex-direction: column; align-items: center; width: 45px; flex: none; padding-top: 5px; font-size: 9px; color: #222; }
.pair { width: 45px; border: 1px solid #777; }
.pair i { display: block; height: 25px; background: #22266f; }
.pair i + i { background: #111; }
.warn { width: 28px; flex: none; padding: 18px 0 0 6px; }
.warn i { display: block; width: 10px; height: 10px; margin: 2px 0 6px; background: #1e2a66; border: 1px solid #222; }
.warn .v { background: #333366; }
.btns { display: flex; flex-direction: column; flex: 1; gap: 7px; }
.btns button { height: 14px; font-size: 9px; line-height: 12px; background: #e8e8e8; border: 1px solid #aaa; color: #111; }
.btns .ok { border-color: #4a9be8; }
.btns .far { margin-top: 5px; }
.fields { position: relative; display: flex; color: #222; }
.fcol { width: 70px; flex: none; }
.f { display: flex; align-items: center; height: 19px; }
.f.gap { margin-top: 3px; }
.f input[type=radio] { appearance: none; width: 10px; height: 10px; flex: none; border: 1px solid #888; border-radius: 50%; background: #fff; }
.f input[type=radio]:checked { background: radial-gradient(#222 0 2px, #fff 3px); }
.f label { width: 15px; padding-left: 2px; font-size: 9px; }
.box { flex: none; width: 25px; height: 16px; padding: 0 0 0 4px; line-height: 14px; background: #fff; border: 1px solid #bbb; }
.focus { border-color: #6aabf0; padding: 0 2px; }
mark { background: #3398fe; color: #fff; padding: 0 1px; }
.u { padding-left: 2px; font-size: 9px; }
.hex label { width: 9px; padding: 0; }
.hex .box { width: 42px; }
.rt .f label { width: 24px; text-align: right; padding-right: 2px; }
.rt .f.wide label { width: 14px; }
.rt .wide .box { width: 30px; }
.rt .u { padding-left: 3px; }
.frame { position: absolute; left: -3px; top: 54px; width: 63px; height: 81px; border: 5px solid #3996e6; pointer-events: none; }
</style>
